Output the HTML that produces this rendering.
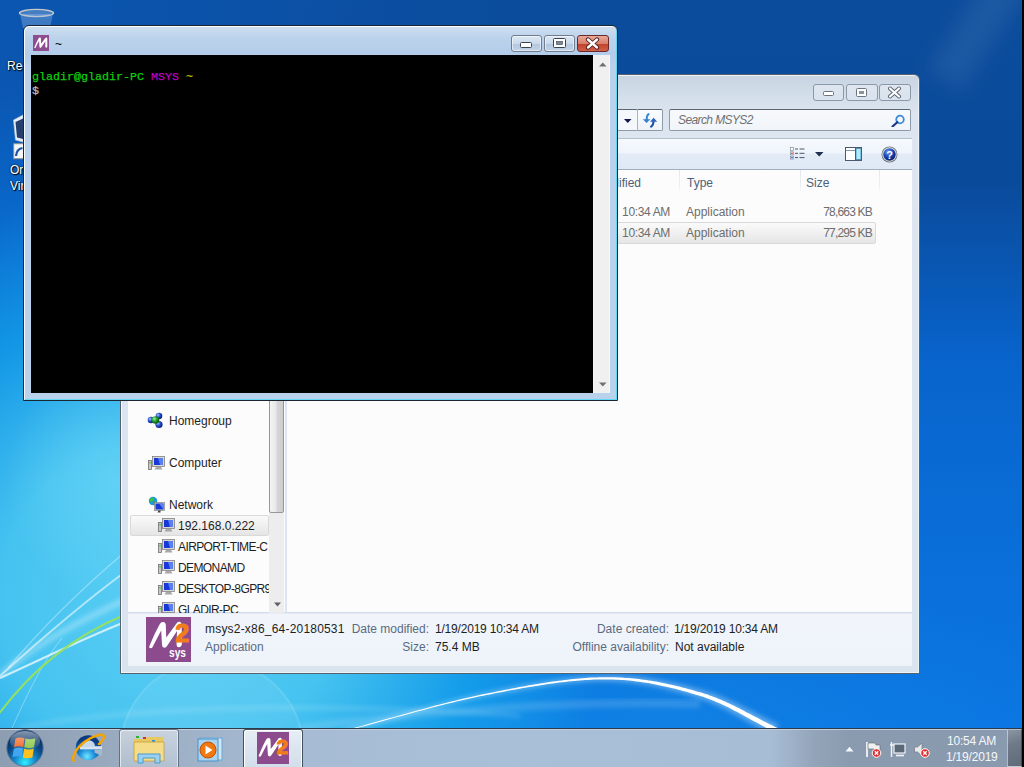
<!DOCTYPE html>
<html><head><meta charset="utf-8">
<style>
*{margin:0;padding:0;box-sizing:border-box}
html,body{width:1024px;height:767px;overflow:hidden;font-family:"Liberation Sans",sans-serif;font-size:12px}
body{position:relative;background:#0a55b5}
.a{position:absolute}
.t{position:absolute;white-space:nowrap;line-height:14px;font-size:12px}
.mono{font-family:"Liberation Mono",monospace;font-size:11.67px;line-height:14px;white-space:pre}
</style></head><body>
<div class="a " style="left:0px;top:0px;width:1024px;height:767px;background:
radial-gradient(ellipse 110px 120px at 115px 480px,rgba(130,225,250,.4) 0,rgba(130,225,250,0) 100%),
radial-gradient(ellipse 560px 540px at 170px 600px,#5acef4 0,#46c3f0 30%,rgba(20,160,235,.85) 55%,rgba(8,120,225,.5) 78%,rgba(15,120,220,0) 100%),
radial-gradient(ellipse 760px 260px at 380px 767px,rgba(40,170,240,.6) 0,rgba(20,140,228,.35) 55%,rgba(10,110,215,0) 100%),
linear-gradient(90deg,rgba(11,95,195,.55) 0,rgba(11,95,195,0) 520px),
linear-gradient(180deg,#0b4c9c 0,#0a4a9a 180px,#0864cc 360px,#0a6ed8 540px,#0a74e2 728px)"></div>
<svg class="a" style="left:0px;top:0px" width="1022" height="728" viewBox="0 0 1022 728"><defs><filter id="bl" x="-20%" y="-20%" width="140%" height="140%"><feGaussianBlur stdDeviation="2.5"/></filter>
<filter id="bl8" x="-50%" y="-50%" width="200%" height="200%"><feGaussianBlur stdDeviation="9"/></filter>
<filter id="bl1"><feGaussianBlur stdDeviation="0.6"/></filter></defs>
<path d="M0 676 C40 640 80 605 125 572" fill="none" stroke="#fff" stroke-opacity=".55" stroke-width="2" filter="url(#bl1)"/>
<path d="M0 678 C40 660 80 640 125 622" fill="none" stroke="#fff" stroke-opacity=".7" stroke-width="2.2" filter="url(#bl1)"/>
<path d="M8 668 C40 630 80 590 125 552" fill="none" stroke="#fff" stroke-opacity=".35" stroke-width="1.2"/>
<path d="M0 675 C30 650 60 630 125 600" fill="none" stroke="#fff" stroke-opacity=".3" stroke-width="6" filter="url(#bl)"/>
<path d="M12 728 C25 700 40 665 62 638" fill="none" stroke="#fff" stroke-opacity=".35" stroke-width="1"/>
<path d="M-2 715 C30 672 70 638 122 616" fill="none" stroke="#92e064" stroke-width="2"/>
<path d="M344.4 732.5 L347.9 731.5 L351.4 730.6 L354.9 729.7 L358.4 728.8 L361.9 727.8 L365.4 726.9 L368.9 725.9 L372.5 725.0 L376.0 724.0 L379.6 723.0 L383.1 722.1 L386.7 721.1 L390.2 720.1 L393.8 719.2 L397.3 718.2 L400.8 717.2 L404.4 716.3 L407.9 715.3 L411.5 714.3 L415.0 713.4 L418.5 712.5 L422.0 711.5 L425.6 710.6 L429.1 709.7 L432.6 708.8 L436.0 707.9 L439.5 707.0 L443.0 706.1 L446.4 705.2 L449.9 704.4 L453.3 703.6 L456.7 702.8 L460.1 702.0 L463.5 701.2 L466.9 700.4 L470.2 699.7 L473.5 699.0 L476.8 698.3 L480.1 697.6 L483.4 696.9 L486.7 696.3 L489.9 695.7 L493.2 695.1 L496.4 694.4 L499.6 693.8 L502.9 693.2 L506.1 692.6 L509.3 692.0 L512.5 691.4 L515.7 690.9 L518.9 690.3 L522.1 689.8 L525.2 689.2 L528.4 688.7 L531.5 688.2 L534.7 687.7 L537.8 687.2 L540.9 686.7 L544.0 686.3 L547.1 685.8 L550.1 685.4 L553.2 685.0 L556.2 684.6 L559.2 684.2 L562.2 683.9 L565.2 683.5 L568.2 683.2 L571.2 682.9 L574.1 682.7 L577.0 682.4 L579.9 682.2 L582.8 682.0 L585.6 681.8 L588.5 681.7 L591.3 681.5 L594.1 681.4 L596.8 681.3 L599.6 681.3 L602.3 681.3 L605.0 681.3 L607.7 681.3 L610.3 681.4 L613.0 681.5 L615.6 681.6 L618.2 681.7 L620.8 681.9 L623.3 682.1 L625.9 682.3 L628.4 682.6 L630.9 682.8 L633.4 683.1 L635.9 683.4 L638.3 683.7 L640.8 684.1 L643.2 684.5 L645.6 684.8 L648.0 685.3 L650.3 685.7 L652.7 686.1 L655.1 686.6 L657.4 687.1 L659.7 687.6 L662.0 688.1 L664.3 688.6 L666.6 689.1 L668.8 689.7 L671.1 690.2 L673.3 690.8 L675.5 691.4 L677.8 692.0 L680.0 692.6 L682.2 693.2 L684.3 693.8 L686.5 694.5 L688.7 695.1 L690.8 695.8 L693.0 696.4 L695.1 697.1 L697.2 697.8 L699.3 698.5 L701.4 699.1 L703.4 699.8 L705.4 700.6 L707.4 701.3 L709.4 702.1 L711.4 702.8 L713.3 703.7 L715.2 704.5 L717.1 705.3 L719.0 706.2 L720.8 707.0 L722.7 707.9 L724.5 708.8 L726.4 709.7 L728.2 710.7 L730.0 711.6 L731.8 712.6 L733.6 713.5 L735.4 714.5 L737.2 715.5 L739.0 716.5 L740.7 717.4 L742.5 718.4 L744.3 719.4 L746.1 720.4 L747.9 721.5 L749.6 722.5 L751.4 723.5 L753.2 724.5 L755.0 725.5 L756.8 726.5 L758.6 727.5 L760.4 728.5 L762.2 729.5 L764.1 730.5 L765.9 731.5 L767.8 732.5 L769.6 733.5 L771.5 734.5 L773.4 735.4 L778.6 724.6 L776.7 723.7 L774.9 722.9 L773.0 722.0 L771.2 721.1 L769.4 720.3 L767.5 719.4 L765.7 718.5 L763.9 717.6 L762.1 716.6 L760.3 715.7 L758.4 714.8 L756.6 713.9 L754.8 712.9 L753.0 712.0 L751.2 711.0 L749.3 710.1 L747.5 709.2 L745.6 708.2 L743.8 707.3 L741.9 706.4 L740.1 705.4 L738.2 704.5 L736.3 703.6 L734.4 702.7 L732.5 701.8 L730.6 700.9 L728.7 700.1 L726.7 699.2 L724.7 698.3 L722.8 697.5 L720.8 696.7 L718.8 695.9 L716.7 695.1 L714.7 694.3 L712.6 693.6 L710.5 692.8 L708.4 692.1 L706.2 691.4 L704.0 690.8 L701.9 690.1 L699.7 689.5 L697.5 688.9 L695.3 688.3 L693.1 687.7 L690.9 687.1 L688.7 686.6 L686.5 686.0 L684.2 685.4 L682.0 684.9 L679.7 684.3 L677.4 683.8 L675.2 683.2 L672.9 682.7 L670.5 682.2 L668.2 681.7 L665.9 681.2 L663.5 680.8 L661.2 680.3 L658.8 679.9 L656.4 679.5 L654.0 679.1 L651.5 678.7 L649.1 678.3 L646.6 678.0 L644.2 677.6 L641.7 677.3 L639.2 677.0 L636.6 676.7 L634.1 676.5 L631.5 676.3 L629.0 676.1 L626.4 675.9 L623.8 675.7 L621.1 675.6 L618.5 675.5 L615.8 675.4 L613.2 675.3 L610.5 675.3 L607.7 675.3 L605.0 675.3 L602.2 675.4 L599.4 675.4 L596.6 675.6 L593.8 675.7 L591.0 675.9 L588.1 676.0 L585.2 676.3 L582.4 676.5 L579.4 676.8 L576.5 677.0 L573.6 677.3 L570.6 677.7 L567.6 678.0 L564.6 678.4 L561.6 678.8 L558.6 679.2 L555.6 679.6 L552.5 680.1 L549.4 680.5 L546.4 681.0 L543.3 681.5 L540.2 682.0 L537.0 682.5 L533.9 683.1 L530.8 683.6 L527.6 684.2 L524.5 684.7 L521.3 685.3 L518.1 685.9 L514.9 686.5 L511.7 687.2 L508.5 687.8 L505.3 688.4 L502.1 689.1 L498.8 689.7 L495.6 690.4 L492.4 691.0 L489.1 691.7 L485.9 692.4 L482.6 693.1 L479.3 693.7 L476.0 694.5 L472.7 695.2 L469.4 696.0 L466.0 696.7 L462.6 697.5 L459.3 698.3 L455.9 699.2 L452.4 700.0 L449.0 700.9 L445.6 701.8 L442.1 702.7 L438.6 703.6 L435.2 704.5 L431.7 705.4 L428.2 706.4 L424.7 707.3 L421.2 708.3 L417.7 709.2 L414.1 710.2 L410.6 711.2 L407.1 712.1 L403.5 713.1 L400.0 714.1 L396.4 715.1 L392.9 716.1 L389.4 717.1 L385.8 718.1 L382.3 719.1 L378.7 720.1 L375.2 721.0 L371.7 722.0 L368.1 723.0 L364.6 723.9 L361.1 724.9 L357.6 725.9 L354.1 726.8 L350.6 727.7 L347.1 728.6 L343.6 729.5 Z" fill="#fff" fill-opacity=".35" filter="url(#bl)"/>
<path d="M344.1 731.4 L347.6 730.5 L351.1 729.6 L354.6 728.7 L358.1 727.8 L361.6 726.8 L365.1 725.9 L368.7 724.9 L372.2 723.9 L375.7 723.0 L379.3 722.0 L382.8 721.0 L386.4 720.1 L389.9 719.1 L393.5 718.1 L397.0 717.1 L400.5 716.2 L404.1 715.2 L407.6 714.2 L411.2 713.3 L414.7 712.3 L418.2 711.3 L421.7 710.4 L425.3 709.5 L428.8 708.5 L432.3 707.6 L435.7 706.7 L439.2 705.8 L442.7 704.9 L446.1 704.1 L449.6 703.2 L453.0 702.4 L456.4 701.6 L459.8 700.7 L463.2 700.0 L466.6 699.2 L469.9 698.4 L473.3 697.7 L476.6 697.0 L479.9 696.3 L483.1 695.7 L486.4 695.0 L489.7 694.4 L492.9 693.7 L496.1 693.1 L499.4 692.5 L502.6 691.9 L505.8 691.2 L509.0 690.6 L512.3 690.0 L515.5 689.5 L518.6 688.9 L521.8 688.3 L525.0 687.8 L528.1 687.2 L531.3 686.7 L534.4 686.2 L537.6 685.7 L540.7 685.2 L543.8 684.7 L546.8 684.3 L549.9 683.8 L553.0 683.4 L556.0 683.0 L559.0 682.6 L562.0 682.2 L565.0 681.9 L568.0 681.6 L571.0 681.3 L573.9 681.0 L576.8 680.7 L579.8 680.5 L582.6 680.3 L585.5 680.1 L588.4 679.9 L591.2 679.7 L594.0 679.6 L596.8 679.5 L599.5 679.5 L602.3 679.4 L605.0 679.4 L607.7 679.4 L610.4 679.5 L613.0 679.6 L615.7 679.7 L618.3 679.8 L620.9 679.9 L623.5 680.1 L626.0 680.3 L628.6 680.6 L631.1 680.8 L633.6 681.1 L636.1 681.4 L638.6 681.7 L641.0 682.0 L643.5 682.4 L645.9 682.7 L648.3 683.1 L650.7 683.5 L653.1 684.0 L655.5 684.4 L657.8 684.9 L660.1 685.4 L662.5 685.9 L664.8 686.4 L667.1 686.9 L669.3 687.4 L671.6 688.0 L673.9 688.5 L676.1 689.1 L678.3 689.7 L680.6 690.3 L682.8 690.9 L685.0 691.5 L687.2 692.1 L689.3 692.7 L691.5 693.4 L693.7 694.0 L695.8 694.7 L698.0 695.3 L700.1 696.0 L702.2 696.6 L704.3 697.3 L706.3 698.0 L708.3 698.8 L710.3 699.5 L712.3 700.3 L714.3 701.1 L716.3 701.9 L718.2 702.8 L720.1 703.6 L722.0 704.5 L723.9 705.3 L725.8 706.2 L727.6 707.1 L729.5 708.1 L731.3 709.0 L733.1 709.9 L735.0 710.9 L736.8 711.8 L738.6 712.8 L740.4 713.8 L742.2 714.7 L744.0 715.7 L745.8 716.7 L747.6 717.7 L749.4 718.7 L751.1 719.7 L752.9 720.7 L754.7 721.6 L756.5 722.6 L758.3 723.6 L760.1 724.6 L762.0 725.6 L763.8 726.6 L765.6 727.5 L767.5 728.5 L769.3 729.5 L771.2 730.4 L773.0 731.3 L774.9 732.3 L777.1 727.7 L775.2 726.9 L773.3 726.0 L771.5 725.1 L769.6 724.2 L767.8 723.3 L766.0 722.3 L764.2 721.4 L762.3 720.5 L760.5 719.5 L758.7 718.6 L756.9 717.6 L755.1 716.7 L753.3 715.7 L751.5 714.8 L749.7 713.8 L747.8 712.9 L746.0 711.9 L744.2 710.9 L742.4 710.0 L740.5 709.1 L738.7 708.1 L736.8 707.2 L735.0 706.3 L733.1 705.3 L731.2 704.4 L729.3 703.5 L727.4 702.7 L725.5 701.8 L723.6 700.9 L721.6 700.1 L719.7 699.3 L717.7 698.4 L715.7 697.6 L713.7 696.9 L711.6 696.1 L709.6 695.4 L707.5 694.6 L705.4 694.0 L703.3 693.3 L701.1 692.6 L699.0 692.0 L696.8 691.4 L694.6 690.8 L692.4 690.1 L690.2 689.5 L688.0 688.9 L685.8 688.3 L683.6 687.8 L681.4 687.2 L679.1 686.6 L676.9 686.1 L674.6 685.5 L672.3 685.0 L670.0 684.5 L667.7 684.0 L665.4 683.5 L663.1 683.0 L660.7 682.5 L658.3 682.1 L656.0 681.6 L653.6 681.2 L651.2 680.8 L648.8 680.4 L646.3 680.1 L643.9 679.7 L641.4 679.4 L638.9 679.1 L636.4 678.8 L633.9 678.5 L631.4 678.3 L628.8 678.1 L626.2 677.9 L623.6 677.7 L621.0 677.5 L618.4 677.4 L615.8 677.3 L613.1 677.2 L610.4 677.2 L607.7 677.2 L605.0 677.2 L602.3 677.2 L599.5 677.3 L596.7 677.4 L593.9 677.5 L591.1 677.6 L588.2 677.8 L585.4 678.0 L582.5 678.2 L579.6 678.5 L576.7 678.7 L573.7 679.0 L570.8 679.3 L567.8 679.7 L564.8 680.0 L561.8 680.4 L558.8 680.8 L555.8 681.2 L552.7 681.6 L549.7 682.1 L546.6 682.5 L543.5 683.0 L540.4 683.5 L537.3 684.0 L534.2 684.5 L531.0 685.1 L527.9 685.6 L524.7 686.2 L521.5 686.8 L518.4 687.3 L515.2 687.9 L512.0 688.6 L508.8 689.2 L505.6 689.8 L502.3 690.4 L499.1 691.1 L495.9 691.7 L492.6 692.4 L489.4 693.0 L486.1 693.7 L482.9 694.3 L479.6 695.0 L476.3 695.7 L473.0 696.4 L469.6 697.2 L466.3 698.0 L462.9 698.7 L459.5 699.6 L456.1 700.4 L452.7 701.2 L449.3 702.1 L445.9 702.9 L442.4 703.8 L438.9 704.7 L435.5 705.6 L432.0 706.5 L428.5 707.5 L425.0 708.4 L421.5 709.4 L417.9 710.3 L414.4 711.3 L410.9 712.3 L407.4 713.2 L403.8 714.2 L400.3 715.2 L396.7 716.2 L393.2 717.2 L389.7 718.1 L386.1 719.1 L382.6 720.1 L379.0 721.1 L375.5 722.1 L371.9 723.0 L368.4 724.0 L364.9 725.0 L361.4 725.9 L357.9 726.9 L354.4 727.8 L350.9 728.7 L347.4 729.7 L343.9 730.6 Z" fill="#fff"/>
<circle cx="212" cy="752" r="92" fill="#fff" fill-opacity=".07" stroke="#fff" stroke-opacity=".12" stroke-width="2" filter="url(#bl1)"/>
<path d="M20 728 C100 712 220 706 330 708 C400 709 470 712 520 716" fill="none" stroke="#fff" stroke-opacity=".22" stroke-width="3" filter="url(#bl)"/>
<path d="M300 728 C420 712 560 700 700 704" fill="none" stroke="#fff" stroke-opacity=".15" stroke-width="8" filter="url(#bl)"/>
<path d="M1012 -25 L945 80" stroke="#fff" stroke-opacity=".07" stroke-width="40" filter="url(#bl8)"/></svg>
<svg class="a" style="left:18px;top:8px" width="38" height="20" viewBox="0 0 38 20"><ellipse cx="18.5" cy="5" rx="17" ry="3.6" fill="#6a9ad0" fill-opacity=".6" stroke="#c8c8c8" stroke-width="1.4"/>
<path d="M2 6 L5 20 H32 L35 6" fill="#a0c0e8" fill-opacity=".35"/></svg>
<div class="t" style="left:7px;top:59px;color:#fff;text-shadow:0 0 2px #000,1px 1px 1px #000;letter-spacing:0px">Rec</div>
<svg class="a" style="left:12px;top:113px" width="12" height="50" viewBox="0 0 12 50"><path d="M1.5 7 L11 2 V29 L3.5 27 Z" fill="#e8eef6" stroke="#c0c8d0" stroke-width=".6"/><path d="M3.5 9 L11 5.5 V26 L5 24.5 Z" fill="#26406e"/>
<rect x="1.7" y="30.7" width="10" height="15" fill="#f4f6f8" stroke="#909090" stroke-width="1"/><path d="M4 43 Q4.5 36 10.5 35" fill="none" stroke="#2050a0" stroke-width="2.2"/></svg>
<div class="t" style="left:10px;top:163px;color:#fff;text-shadow:0 0 2px #000,1px 1px 1px #000">Or</div>
<div class="t" style="left:10px;top:179px;color:#fff;text-shadow:0 0 2px #000,1px 1px 1px #000">Vir</div>
<div class="a " style="left:120px;top:74px;width:800px;height:600px;border:1px solid #56626e;border-radius:6px 6px 0 0;background:linear-gradient(#c8d4e2 0,#d3deea 20px,#dce5ef 40px,#dde6f0 62px,#dae4ef 100%);box-shadow:inset 1px 1px 0 rgba(255,255,255,.7),inset -1px -1px 0 rgba(255,255,255,.5)"></div>
<div class="a " style="left:813px;top:84px;width:31px;height:17px;border:1px solid #8b98a7;border-radius:3px;background:linear-gradient(rgba(255,255,255,.35),rgba(255,255,255,.1))"></div>
<div class="a " style="left:846px;top:84px;width:32px;height:17px;border:1px solid #8b98a7;border-radius:3px;background:linear-gradient(rgba(255,255,255,.35),rgba(255,255,255,.1))"></div>
<div class="a " style="left:879px;top:84px;width:32px;height:17px;border:1px solid #8b98a7;border-radius:3px;background:linear-gradient(rgba(255,255,255,.35),rgba(255,255,255,.1))"></div>
<div class="a " style="left:400px;top:109px;width:238px;height:22px;border:1px solid #8e9aa8;border-top-color:#5a6672;border-radius:2px;background:#f4f7fb"></div>
<div class="a " style="left:637px;top:109px;width:26px;height:22px;border:1px solid #8e9aa8;border-top-color:#5a6672;border-left-color:#a8b4c2;border-radius:0 2px 2px 0;background:linear-gradient(#fafcfe,#eef3f8)"></div>
<div class="a " style="left:669px;top:109px;width:242px;height:22px;border:1px solid #8e9aa8;border-top-color:#5a6672;border-radius:2px;background:linear-gradient(#f7f9fc,#f1f5fa)"></div>
<div class="t" style="left:678px;top:113px;color:#707070;font-style:italic;letter-spacing:-0.6px">Search MSYS2</div>
<div class="a " style="left:128px;top:138px;width:784px;height:32px;background:linear-gradient(#f6f9fd 0,#eff5fb 14px,#e2ebf6 15px,#dfe9f5 30px);border-top:1px solid #b4bfcc;border-bottom:1px solid #a0aebd"></div>
<div class="a " style="left:128px;top:170px;width:158px;height:443px;background:#fcfcfc;border-right:1px solid #dbe4f0"></div>
<div class="a " style="left:286px;top:170px;width:626px;height:443px;background:#fcfcfc"></div>
<div class="a " style="left:128px;top:612px;width:784px;height:54px;background:linear-gradient(#f1f5fb,#eef3fa);border-top:1px solid #d2dce8;box-shadow:inset 0 1px 0 #e4ebf4"></div>
<div class="t" style="left:241px;width:400px;text-align:right;top:176px;color:#4c607a;">Date modified</div>
<div class="t" style="left:687px;top:176px;color:#4c607a;">Type</div>
<div class="t" style="left:806px;top:176px;color:#4c607a;">Size</div>
<div class="a " style="left:679px;top:170px;width:1px;height:22px;background:linear-gradient(#e3e8ef,#edf1f6 80%,rgba(240,244,248,0))"></div>
<div class="a " style="left:800px;top:170px;width:1px;height:22px;background:linear-gradient(#e3e8ef,#edf1f6 80%,rgba(240,244,248,0))"></div>
<div class="a " style="left:879px;top:170px;width:1px;height:22px;background:linear-gradient(#e3e8ef,#edf1f6 80%,rgba(240,244,248,0))"></div>
<div class="a " style="left:287px;top:222px;width:589px;height:22px;border:1px solid #d9d9d9;border-radius:2px;background:linear-gradient(#fafafa,#e6e6e6)"></div>
<div class="t" style="left:270px;width:400px;text-align:right;top:205px;color:#6d6d6d;letter-spacing:-0.35px">10:34 AM</div>
<div class="t" style="left:686px;top:205px;color:#6d6d6d;">Application</div>
<div class="t" style="left:472px;width:400px;text-align:right;top:205px;color:#6d6d6d;letter-spacing:-0.8px">78,663 KB</div>
<div class="t" style="left:270px;width:400px;text-align:right;top:226px;color:#6d6d6d;letter-spacing:-0.35px">10:34 AM</div>
<div class="t" style="left:686px;top:226px;color:#6d6d6d;">Application</div>
<div class="t" style="left:472px;width:400px;text-align:right;top:226px;color:#6d6d6d;letter-spacing:-0.8px">77,295 KB</div>
<div class="a " style="left:128px;top:170px;width:141px;height:443px;overflow:hidden"><div class="a" style="left:2px;top:345px;width:139px;height:21px;border:1px solid #d9d9d9;border-radius:2px;background:linear-gradient(#fafafa,#e5e5e5)"></div><div class="t" style="left:41px;top:244px;color:#1e1e1e;letter-spacing:0px">Homegroup</div><div class="t" style="left:41px;top:286px;color:#1e1e1e;letter-spacing:0px">Computer</div><div class="t" style="left:41px;top:328px;color:#1e1e1e;letter-spacing:0px">Network</div><div class="t" style="left:50px;top:349px;color:#1e1e1e;letter-spacing:0px">192.168.0.222</div><div class="t" style="left:50px;top:370px;color:#1e1e1e;letter-spacing:-0.6px">AIRPORT-TIME-C</div><div class="t" style="left:50px;top:391px;color:#1e1e1e;letter-spacing:-0.6px">DEMONAMD</div><div class="t" style="left:50px;top:412px;color:#1e1e1e;letter-spacing:-0.6px">DESKTOP-8GPR9</div><div class="t" style="left:50px;top:433px;color:#1e1e1e;letter-spacing:-0.6px">GLADIR-PC</div><svg class="a" style="left:20px;top:286px" width="17" height="14" viewBox="0 0 17 14"><rect x=".5" y="4.5" width="3" height="9" fill="#c8c8c8" stroke="#707070" stroke-width=".8"/><rect x="1.3" y="6" width="1.4" height="1.4" fill="#30d030"/><rect x="4.5" y=".5" width="12" height="10" fill="#d8d8d8" stroke="#808080" stroke-width=".8"/><rect x="6" y="2" width="9" height="7" fill="#1838d8"/><path d="M10 2 H15 V9 H12 Z" fill="#5a80f0"/><path d="M8 11 H13 L14.5 13.5 H6.5 Z" fill="#a8a8a8"/></svg><svg class="a" style="left:30px;top:348px" width="17" height="14" viewBox="0 0 17 14"><rect x=".5" y="4.5" width="3" height="9" fill="#c8c8c8" stroke="#707070" stroke-width=".8"/><rect x="1.3" y="6" width="1.4" height="1.4" fill="#30d030"/><rect x="4.5" y=".5" width="12" height="10" fill="#d8d8d8" stroke="#808080" stroke-width=".8"/><rect x="6" y="2" width="9" height="7" fill="#1838d8"/><path d="M10 2 H15 V9 H12 Z" fill="#5a80f0"/><path d="M8 11 H13 L14.5 13.5 H6.5 Z" fill="#a8a8a8"/></svg><svg class="a" style="left:30px;top:369px" width="17" height="14" viewBox="0 0 17 14"><rect x=".5" y="4.5" width="3" height="9" fill="#c8c8c8" stroke="#707070" stroke-width=".8"/><rect x="1.3" y="6" width="1.4" height="1.4" fill="#30d030"/><rect x="4.5" y=".5" width="12" height="10" fill="#d8d8d8" stroke="#808080" stroke-width=".8"/><rect x="6" y="2" width="9" height="7" fill="#1838d8"/><path d="M10 2 H15 V9 H12 Z" fill="#5a80f0"/><path d="M8 11 H13 L14.5 13.5 H6.5 Z" fill="#a8a8a8"/></svg><svg class="a" style="left:30px;top:390px" width="17" height="14" viewBox="0 0 17 14"><rect x=".5" y="4.5" width="3" height="9" fill="#c8c8c8" stroke="#707070" stroke-width=".8"/><rect x="1.3" y="6" width="1.4" height="1.4" fill="#30d030"/><rect x="4.5" y=".5" width="12" height="10" fill="#d8d8d8" stroke="#808080" stroke-width=".8"/><rect x="6" y="2" width="9" height="7" fill="#1838d8"/><path d="M10 2 H15 V9 H12 Z" fill="#5a80f0"/><path d="M8 11 H13 L14.5 13.5 H6.5 Z" fill="#a8a8a8"/></svg><svg class="a" style="left:30px;top:411px" width="17" height="14" viewBox="0 0 17 14"><rect x=".5" y="4.5" width="3" height="9" fill="#c8c8c8" stroke="#707070" stroke-width=".8"/><rect x="1.3" y="6" width="1.4" height="1.4" fill="#30d030"/><rect x="4.5" y=".5" width="12" height="10" fill="#d8d8d8" stroke="#808080" stroke-width=".8"/><rect x="6" y="2" width="9" height="7" fill="#1838d8"/><path d="M10 2 H15 V9 H12 Z" fill="#5a80f0"/><path d="M8 11 H13 L14.5 13.5 H6.5 Z" fill="#a8a8a8"/></svg><svg class="a" style="left:30px;top:432px" width="17" height="14" viewBox="0 0 17 14"><rect x=".5" y="4.5" width="3" height="9" fill="#c8c8c8" stroke="#707070" stroke-width=".8"/><rect x="1.3" y="6" width="1.4" height="1.4" fill="#30d030"/><rect x="4.5" y=".5" width="12" height="10" fill="#d8d8d8" stroke="#808080" stroke-width=".8"/><rect x="6" y="2" width="9" height="7" fill="#1838d8"/><path d="M10 2 H15 V9 H12 Z" fill="#5a80f0"/><path d="M8 11 H13 L14.5 13.5 H6.5 Z" fill="#a8a8a8"/></svg><svg class="a" style="left:20px;top:326px" width="17" height="17" viewBox="0 0 17 17"><circle cx="5" cy="5" r="4.2" fill="#1a9ad8"/><path d="M2 3 Q4 1 6 2 L5 5 L2 6 Z M6 6 L8 5 L8.5 8 L6 8 Z" fill="#40c040"/><rect x="6.5" y="6.5" width="10" height="8" fill="#d8d8d8" stroke="#707070" stroke-width=".6"/><rect x="7.5" y="7.5" width="8" height="6" fill="#1838d8"/><path d="M11 7.5 H15.5 V13.5 Z" fill="#5a80f0"/><path d="M10.5 14.5 H12.5 V16.5 H9.5 Z" fill="#404040"/></svg></div>
<svg class="a" style="left:147px;top:412px" width="18" height="17" viewBox="0 0 18 17"><defs><radialGradient id="hb" cx="35%" cy="35%" r="65%"><stop offset="0" stop-color="#a8c8ff"/><stop offset=".5" stop-color="#2850d0"/><stop offset="1" stop-color="#102080"/></radialGradient><radialGradient id="hg" cx="35%" cy="35%" r="65%"><stop offset="0" stop-color="#b0f0a0"/><stop offset=".5" stop-color="#20a030"/><stop offset="1" stop-color="#0a5a10"/></radialGradient></defs><circle cx="12" cy="4" r="3.3" fill="url(#hb)"/><circle cx="4" cy="8" r="3.3" fill="url(#hb)"/><circle cx="12" cy="12.5" r="3.6" fill="url(#hb)"/><circle cx="8.5" cy="8" r="3.8" fill="url(#hg)"/></svg>
<div class="a " style="left:269px;top:170px;width:15px;height:443px;background:#ededed"></div>
<div class="a " style="left:269px;top:360px;width:15px;height:153px;border:1px solid #979797;border-radius:2px;background:linear-gradient(90deg,#f4f4f4,#e8e8e8 45%,#d6d6d6 55%,#cdcdcd)"></div>
<svg class="a" style="left:274px;top:602px" width="8" height="5" viewBox="0 0 8 5"><path d="M0 0.5 H7 L3.5 4.5 Z" fill="#606060"/></svg>
<div class="a " style="left:286px;top:170px;width:1px;height:443px;background:#dce6f4"></div>
<svg class="a" style="left:790px;top:147px" width="16" height="13" viewBox="0 0 16 13"><rect x=".5" y=".5" width="3" height="3" fill="#fff" stroke="#8090a0" stroke-width=".7"/><rect x=".5" y="4.8" width="3" height="3" fill="#fff" stroke="#8090a0" stroke-width=".7"/><rect x="1.3" y="5.6" width="1.4" height="1.4" fill="#e02020"/><rect x=".5" y="9.1" width="3" height="3" fill="#fff" stroke="#8090a0" stroke-width=".7"/><rect x="1.3" y="9.9" width="1.4" height="1.4" fill="#2040e0"/><path d="M5 2 H8 M9.5 2 H14.5 M5 6.3 H8 M9.5 6.3 H14.5 M5 10.6 H8 M9.5 10.6 H14.5" stroke="#4a5868" stroke-width="1"/></svg>
<svg class="a" style="left:815px;top:152px" width="9" height="5" viewBox="0 0 9 5"><path d="M0 0 H8.5 L4.25 4.5 Z" fill="#1e3050"/></svg>
<svg class="a" style="left:845px;top:147px" width="17" height="14" viewBox="0 0 17 14"><rect x=".5" y=".5" width="16" height="13" fill="#fff" stroke="#4a5a70"/><path d="M1 3.5 H10" stroke="#8898b0"/><rect x="10.5" y="1" width="6" height="12" fill="#7ac8e8" stroke="#4a5a70"/><rect x="12" y="2" width="3" height="10" fill="#b8e8f8"/></svg>
<svg class="a" style="left:881px;top:146px" width="17" height="17" viewBox="0 0 17 17"><defs><radialGradient id="hp" cx="40%" cy="30%" r="70%"><stop offset="0" stop-color="#6aa0f0"/><stop offset=".6" stop-color="#1a40b0"/><stop offset="1" stop-color="#0a2070"/></radialGradient></defs><circle cx="8.5" cy="8.5" r="8" fill="#6a7078"/><circle cx="8.5" cy="8.5" r="7.2" fill="#e0e4e8"/><circle cx="8.5" cy="8.5" r="6.2" fill="url(#hp)"/><text x="8.5" y="12.6" text-anchor="middle" font-family="Liberation Sans" font-weight="bold" font-size="11" fill="#fff">?</text></svg>
<svg class="a" style="left:624px;top:119px" width="8" height="5" viewBox="0 0 8 5"><path d="M0 0 H7.5 L3.75 4 Z" fill="#101850"/></svg>
<svg class="a" style="left:640px;top:112px" width="19" height="16" viewBox="0 0 19 16"><path d="M8.6 2 Q6.5 3.5 6.7 8" fill="none" stroke="#3a8ad8" stroke-width="2" stroke-linecap="round"/><path d="M2.8 7.2 L10.4 7.2 L6.6 11 Z" fill="#3580d0"/><path d="M13.5 9 Q13.6 13 11 14.8" fill="none" stroke="#1e50a8" stroke-width="2" stroke-linecap="round"/><path d="M13.6 5.8 L17.2 9.8 L10 9.8 Z" fill="#2a62c0"/></svg>
<svg class="a" style="left:890px;top:114px" width="16" height="13" viewBox="0 0 16 13"><circle cx="10" cy="5.5" r="3.8" fill="none" stroke="#3a8ad8" stroke-width="1.8"/><path d="M7.3 8.2 L2.5 12.5" stroke="#1a3a88" stroke-width="2.2" stroke-linecap="round"/></svg>
<svg class="a" style="left:823px;top:91px" width="12" height="6" viewBox="0 0 12 6"><rect x=".5" y=".5" width="10" height="4" rx="1" fill="#fff" stroke="#6a7480"/></svg>
<svg class="a" style="left:856px;top:88px" width="12" height="10" viewBox="0 0 12 10"><rect x=".5" y=".5" width="10" height="8" rx="1" fill="#fff" stroke="#6a7480"/><rect x="3" y="3" width="5" height="3" fill="#8a949e"/></svg>
<svg class="a" style="left:887px;top:86px" width="15" height="13" viewBox="0 0 15 13"><path d="M3 2.5 L12 10.5 M12 2.5 L3 10.5" stroke="#5a6470" stroke-width="4" stroke-linecap="round"/><path d="M3 2.5 L12 10.5 M12 2.5 L3 10.5" stroke="#fff" stroke-width="2.2" stroke-linecap="round"/></svg>
<svg class="a" style="left:146px;top:617px" width="45" height="45" viewBox="0 0 45 45"><rect width="45" height="45" fill="#8b4b8d"/><path transform="matrix(1.4 0 0 1.4 0.9 -3.4)" d="M1.5 24 C4 18 7 11 9.5 7 Q10.5 5.8 12 6 Q13.5 6.3 13.5 8 L13.8 17 L21.5 6.5 Q22.8 5.3 24 6 Q25 6.8 24.8 8.5 L25 20 Q25.3 24 23 24 Q21 24 21.2 21.5 L21.5 12.5 L14.5 23 Q13.5 24.8 12 24.3 Q10.8 23.8 10.8 22 L10.2 12 C8 16 6 20 4 24 Q3 25.5 1.5 24 Z" fill="#fff"/><text x="29.3" y="25.1" font-family="Liberation Sans" font-weight="bold" font-size="25" fill="#f07d1a" stroke="#f07d1a" stroke-width="1.2">2</text><text transform="translate(23 39.5) scale(0.78 1)" font-family="Liberation Sans" font-weight="bold" font-size="13" fill="#fff">sys</text></svg>
<div class="t" style="left:205px;top:622px;color:#1e1e1e;letter-spacing:0.2px">msys2-x86_64-20180531</div>
<div class="t" style="left:205px;top:640px;color:#5a6b80;">Application</div>
<div class="t" style="left:29px;width:400px;text-align:right;top:622px;color:#5a6b80;">Date modified:</div>
<div class="t" style="left:435px;top:622px;color:#1e1e1e;letter-spacing:-0.2px">1/19/2019 10:34 AM</div>
<div class="t" style="left:29px;width:400px;text-align:right;top:640px;color:#5a6b80;">Size:</div>
<div class="t" style="left:435px;top:640px;color:#1e1e1e;">75.4 MB</div>
<div class="t" style="left:269px;width:400px;text-align:right;top:622px;color:#5a6b80;">Date created:</div>
<div class="t" style="left:674px;top:622px;color:#1e1e1e;letter-spacing:-0.2px">1/19/2019 10:34 AM</div>
<div class="t" style="left:269px;width:400px;text-align:right;top:640px;color:#5a6b80;">Offline availability:</div>
<div class="t" style="left:675px;top:640px;color:#1e1e1e;">Not available</div>
<div class="a " style="left:23px;top:25px;width:595px;height:376px;border:1px solid #1b2633;border-radius:6px 6px 0 0;background:linear-gradient(#cfdff0 0,#bcd3ec 12px,#b3cce9 28px,#b9d1ea 40px,#b9d1ea 100%);box-shadow:inset 1px 1px 0 rgba(255,255,255,.9),inset -1px -1px 0 #5fd8f4"></div>
<svg class="a" style="left:33px;top:35px" width="16" height="16" viewBox="0 0 16 16"><rect width="16" height="16" fill="#8e4d8f"/><path transform="matrix(0.56 0 0 0.56 0.36 -0.76)" d="M1.5 24 C4 18 7 11 9.5 7 Q10.5 5.8 12 6 Q13.5 6.3 13.5 8 L13.8 17 L21.5 6.5 Q22.8 5.3 24 6 Q25 6.8 24.8 8.5 L25 20 Q25.3 24 23 24 Q21 24 21.2 21.5 L21.5 12.5 L14.5 23 Q13.5 24.8 12 24.3 Q10.8 23.8 10.8 22 L10.2 12 C8 16 6 20 4 24 Q3 25.5 1.5 24 Z" fill="#fff"/></svg>
<div class="t" style="left:55px;top:37px;color:#000;">~</div>
<div class="a " style="left:511px;top:35px;width:31px;height:17px;border:1px solid #6f7d8e;border-radius:3px;background:linear-gradient(#dde8f4 0,#cad9eb 50%,#b2c6de 51%,#c3d4e8 100%);box-shadow:inset 0 0 0 1px rgba(255,255,255,.55)"></div>
<div class="a " style="left:544px;top:35px;width:31px;height:17px;border:1px solid #6f7d8e;border-radius:3px;background:linear-gradient(#dde8f4 0,#cad9eb 50%,#b2c6de 51%,#c3d4e8 100%);box-shadow:inset 0 0 0 1px rgba(255,255,255,.55)"></div>
<div class="a " style="left:577px;top:35px;width:32px;height:17px;border:1px solid #6b2a2a;border-radius:3px;background:linear-gradient(#e8a898 0,#d8806c 50%,#c0402a 51%,#d06048 100%)"></div>
<svg class="a" style="left:520px;top:42px" width="12" height="6" viewBox="0 0 12 6"><rect x=".5" y=".5" width="11" height="5" rx="1" fill="#fff" stroke="#3a4450"/></svg>
<svg class="a" style="left:553px;top:38px" width="13" height="10" viewBox="0 0 13 10"><rect x=".5" y=".5" width="12" height="9" rx="1" fill="#fff" stroke="#3a4450"/><rect x="3.5" y="3.5" width="6" height="3" fill="#7a8694" stroke="#3a4450" stroke-width=".6"/></svg>
<svg class="a" style="left:585px;top:37px" width="15" height="13" viewBox="0 0 15 13"><path d="M3 2.5 L12 10.5 M12 2.5 L3 10.5" stroke="#4a1818" stroke-width="4.2" stroke-linecap="round"/><path d="M3 2.5 L12 10.5 M12 2.5 L3 10.5" stroke="#fff" stroke-width="2.4" stroke-linecap="round"/></svg>
<div class="a " style="left:31px;top:55px;width:562px;height:338px;background:#000"></div>
<div class="a mono" style="left:32px;top:70px;-webkit-text-stroke:0.25px currentColor"><span style="color:#0cd00c">gladir@gladir-PC</span> <span style="color:#bf00bf">MSYS</span> <span style="color:#bfbf00">~</span>
<span style="color:#bfbfbf">$</span></div>
<div class="a " style="left:593px;top:55px;width:17px;height:338px;background:linear-gradient(90deg,#fafafa 0,#f0f0f0 1px,#f0f0f0 16px,#fbf7f2 16px)"></div>
<svg class="a" style="left:599px;top:62px" width="8" height="5" viewBox="0 0 8 5"><path d="M0 4.5 L3.75 0.5 L7.5 4.5 Z" fill="#707070"/></svg>
<svg class="a" style="left:599px;top:382px" width="8" height="5" viewBox="0 0 8 5"><path d="M0 0.5 H7.5 L3.75 4.5 Z" fill="#707070"/></svg>
<div class="a " style="left:0px;top:728px;width:1022px;height:39px;background:linear-gradient(90deg,#8e9eb2 0,#98a9bd 100px,#a7bcd4 300px,#a9bfd8 520px,#a7bdd6 770px,#93a4b9 815px,#8a9aaf 850px,#8a9aae 1022px);border-top:1px solid #2d3a48;box-shadow:inset 0 1px 0 #c0d0e2"></div>
<svg class="a" style="left:6px;top:729px" width="38" height="38" viewBox="0 0 38 38"><defs><radialGradient id="orb" cx="50%" cy="90%" r="75%"><stop offset="0" stop-color="#30f0ff"/><stop offset=".35" stop-color="#1890d0"/><stop offset=".7" stop-color="#0c4a88"/><stop offset="1" stop-color="#0a3060"/></radialGradient>
<linearGradient id="gl" x1="0" y1="0" x2="0" y2="1"><stop offset="0" stop-color="#fff" stop-opacity=".5"/><stop offset="1" stop-color="#fff" stop-opacity="0"/></linearGradient></defs>
<circle cx="19" cy="19" r="18.2" fill="url(#orb)" stroke="#5a7898" stroke-width="1"/>
<path d="M9.5 9.5 Q13.5 7.5 18.5 9.3 L17.2 18 Q12.5 16.5 8 18.2 Z" fill="#f5621f"/>
<path d="M19.6 9.6 Q24.5 11.2 29.5 9.2 L28 18.2 Q23 20 18.3 18.3 Z" fill="#8cc63f"/>
<path d="M7.8 19.6 Q12.3 17.9 17 19.4 L15.7 28 Q11 26.5 6.5 28.2 Z" fill="#42a5f0"/>
<path d="M18.1 19.7 Q22.8 21.3 27.8 19.6 L26.4 28.5 Q21.5 30.2 16.8 28.4 Z" fill="#fdc220"/>
<ellipse cx="19" cy="12" rx="15" ry="10" fill="url(#gl)"/></svg>
<svg class="a" style="left:71px;top:733px" width="34" height="30" viewBox="0 0 34 30"><defs><radialGradient id="ieg" cx="45%" cy="85%" r="70%"><stop offset="0" stop-color="#70e8ff"/><stop offset=".45" stop-color="#1a8ad8"/><stop offset="1" stop-color="#0a3a80"/></radialGradient></defs>
<circle cx="17.3" cy="14.7" r="12.5" fill="url(#ieg)"/>
<path d="M11 13.5 Q11.5 7.5 17.5 7.3 Q23.5 7.5 24 13.5 Z" fill="#c8d8e8"/>
<rect x="9" y="13.2" width="22" height="3.2" fill="#d8e4f0"/>
<path d="M23.5 16.4 H31 V23 Q27 21 23.5 19.5 Z" fill="#a6b9cf"/>
<path d="M3 28 C0 25 5 15 14 8.5 C22 3 31 0.5 32.5 2.5 C34 4.5 31 8.5 28 11" fill="none" stroke="#f5a400" stroke-width="2.4" stroke-linecap="round"/></svg>
<div class="a " style="left:119px;top:729px;width:60px;height:38px;border:1px solid rgba(60,80,100,.7);border-bottom:none;border-radius:3px 3px 0 0;background:linear-gradient(rgba(255,255,255,.45),rgba(255,255,255,.22));box-shadow:inset 1px 1px 0 rgba(255,255,255,.6),inset -1px 0 0 rgba(255,255,255,.5)"></div>
<svg class="a" style="left:133px;top:734px" width="32" height="30" viewBox="0 0 32 30"><path d="M1 5 H12 L14 3 H30 V26 H1 Z" fill="#e8c860"/>
<rect x="3" y="2" width="3" height="2" fill="#30b030"/><rect x="10" y="3" width="3" height="2" fill="#d03030"/><rect x="19" y="6" width="3" height="2" fill="#3090e0"/>
<path d="M1 8 H31 V27 H1 Z" fill="#f5dc88" stroke="#c8a040" stroke-width=".8"/>
<path d="M5 20 H27 V29 H22 V24 H10 V29 H5 Z" fill="#9ad0f0" stroke="#4a9ad0" stroke-width="1"/></svg>
<svg class="a" style="left:197px;top:737px" width="27" height="26" viewBox="0 0 27 26"><rect x="3" y="1" width="22" height="22" fill="#cfe6f6" stroke="#6aa8d8"/>
<rect x="1" y="2" width="20" height="22" fill="#a8d4f0" stroke="#4a90c8"/>
<circle cx="11" cy="13" r="8" fill="#f07810" stroke="#c85000"/>
<path d="M8.5 8.5 L15.5 13 L8.5 17.5 Z" fill="#fff"/></svg>
<div class="a " style="left:243px;top:729px;width:60px;height:38px;border:1px solid rgba(40,55,75,.85);border-bottom:none;border-radius:3px 3px 0 0;background:linear-gradient(#e6edf5,#d2deea);box-shadow:inset 1px 1px 0 #fff,inset -1px 0 0 #fff"></div>
<svg class="a" style="left:257px;top:732px" width="32" height="32" viewBox="0 0 32 32"><rect width="32" height="32" fill="#8b4b8d"/><path d="M1.5 24 C4 18 7 11 9.5 7 Q10.5 5.8 12 6 Q13.5 6.3 13.5 8 L13.8 17 L21.5 6.5 Q22.8 5.3 24 6 Q25 6.8 24.8 8.5 L25 20 Q25.3 24 23 24 Q21 24 21.2 21.5 L21.5 12.5 L14.5 23 Q13.5 24.8 12 24.3 Q10.8 23.8 10.8 22 L10.2 12 C8 16 6 20 4 24 Q3 25.5 1.5 24 Z" fill="#fff"/><text x="19.6" y="22.4" font-family="Liberation Sans" font-weight="bold" font-size="21" fill="#f07d1a" stroke="#f07d1a" stroke-width="1">2</text></svg>
<svg class="a" style="left:845px;top:746px" width="9" height="6" viewBox="0 0 9 6"><path d="M0.5 5.5 L4.5 0.8 L8.5 5.5 Z" fill="#f4f8fc"/></svg>
<svg class="a" style="left:865px;top:741px" width="17" height="17" viewBox="0 0 17 17"><path d="M2 1 V16" stroke="#fff" stroke-width="1.6"/><path d="M3 2 H10 L11 4 H15 V10 H10 L9 8 H3 Z" fill="#f0f0f0" stroke="#606870" stroke-width=".6"/>
<circle cx="11.5" cy="12" r="4.3" fill="#e03030" stroke="#fff" stroke-width="1"/><path d="M9.8 10.3 L13.2 13.7 M13.2 10.3 L9.8 13.7" stroke="#fff" stroke-width="1.3"/></svg>
<svg class="a" style="left:889px;top:741px" width="17" height="17" viewBox="0 0 17 17"><rect x="5" y="3" width="11" height="9" fill="#5a6878" stroke="#f0f4f8" stroke-width="1.2"/><path d="M7 14.5 H15" stroke="#f0f4f8" stroke-width="1.6"/>
<path d="M2.5 1 V16 M1 4 H5" stroke="#f0f4f8" stroke-width="1.4"/></svg>
<svg class="a" style="left:913px;top:741px" width="17" height="17" viewBox="0 0 17 17"><path d="M1.5 6 H4.5 L9 2 V15 L4.5 11 H1.5 Z" fill="#e8e8e8" stroke="#707880" stroke-width=".7"/>
<circle cx="12" cy="12" r="4.3" fill="#e03030" stroke="#fff" stroke-width="1"/><path d="M10.3 10.3 L13.7 13.7 M13.7 10.3 L10.3 13.7" stroke="#fff" stroke-width="1.3"/></svg>
<div class="t" style="left:947px;top:734px;color:#f4f8fc;letter-spacing:-0.2px">10:54 AM</div>
<div class="t" style="left:946px;top:750px;color:#f4f8fc;letter-spacing:-0.2px">1/19/2019</div>
<div class="a " style="left:1007px;top:729px;width:15px;height:38px;border:1px solid rgba(230,240,250,.6);border-right-color:rgba(40,50,60,.6);background:linear-gradient(160deg,#8a96a4 0,#6e7a88 40%,#5f6b78 100%)"></div>
<div class="a " style="left:1022px;top:0px;width:2px;height:767px;background:#000"></div>
</body></html>
